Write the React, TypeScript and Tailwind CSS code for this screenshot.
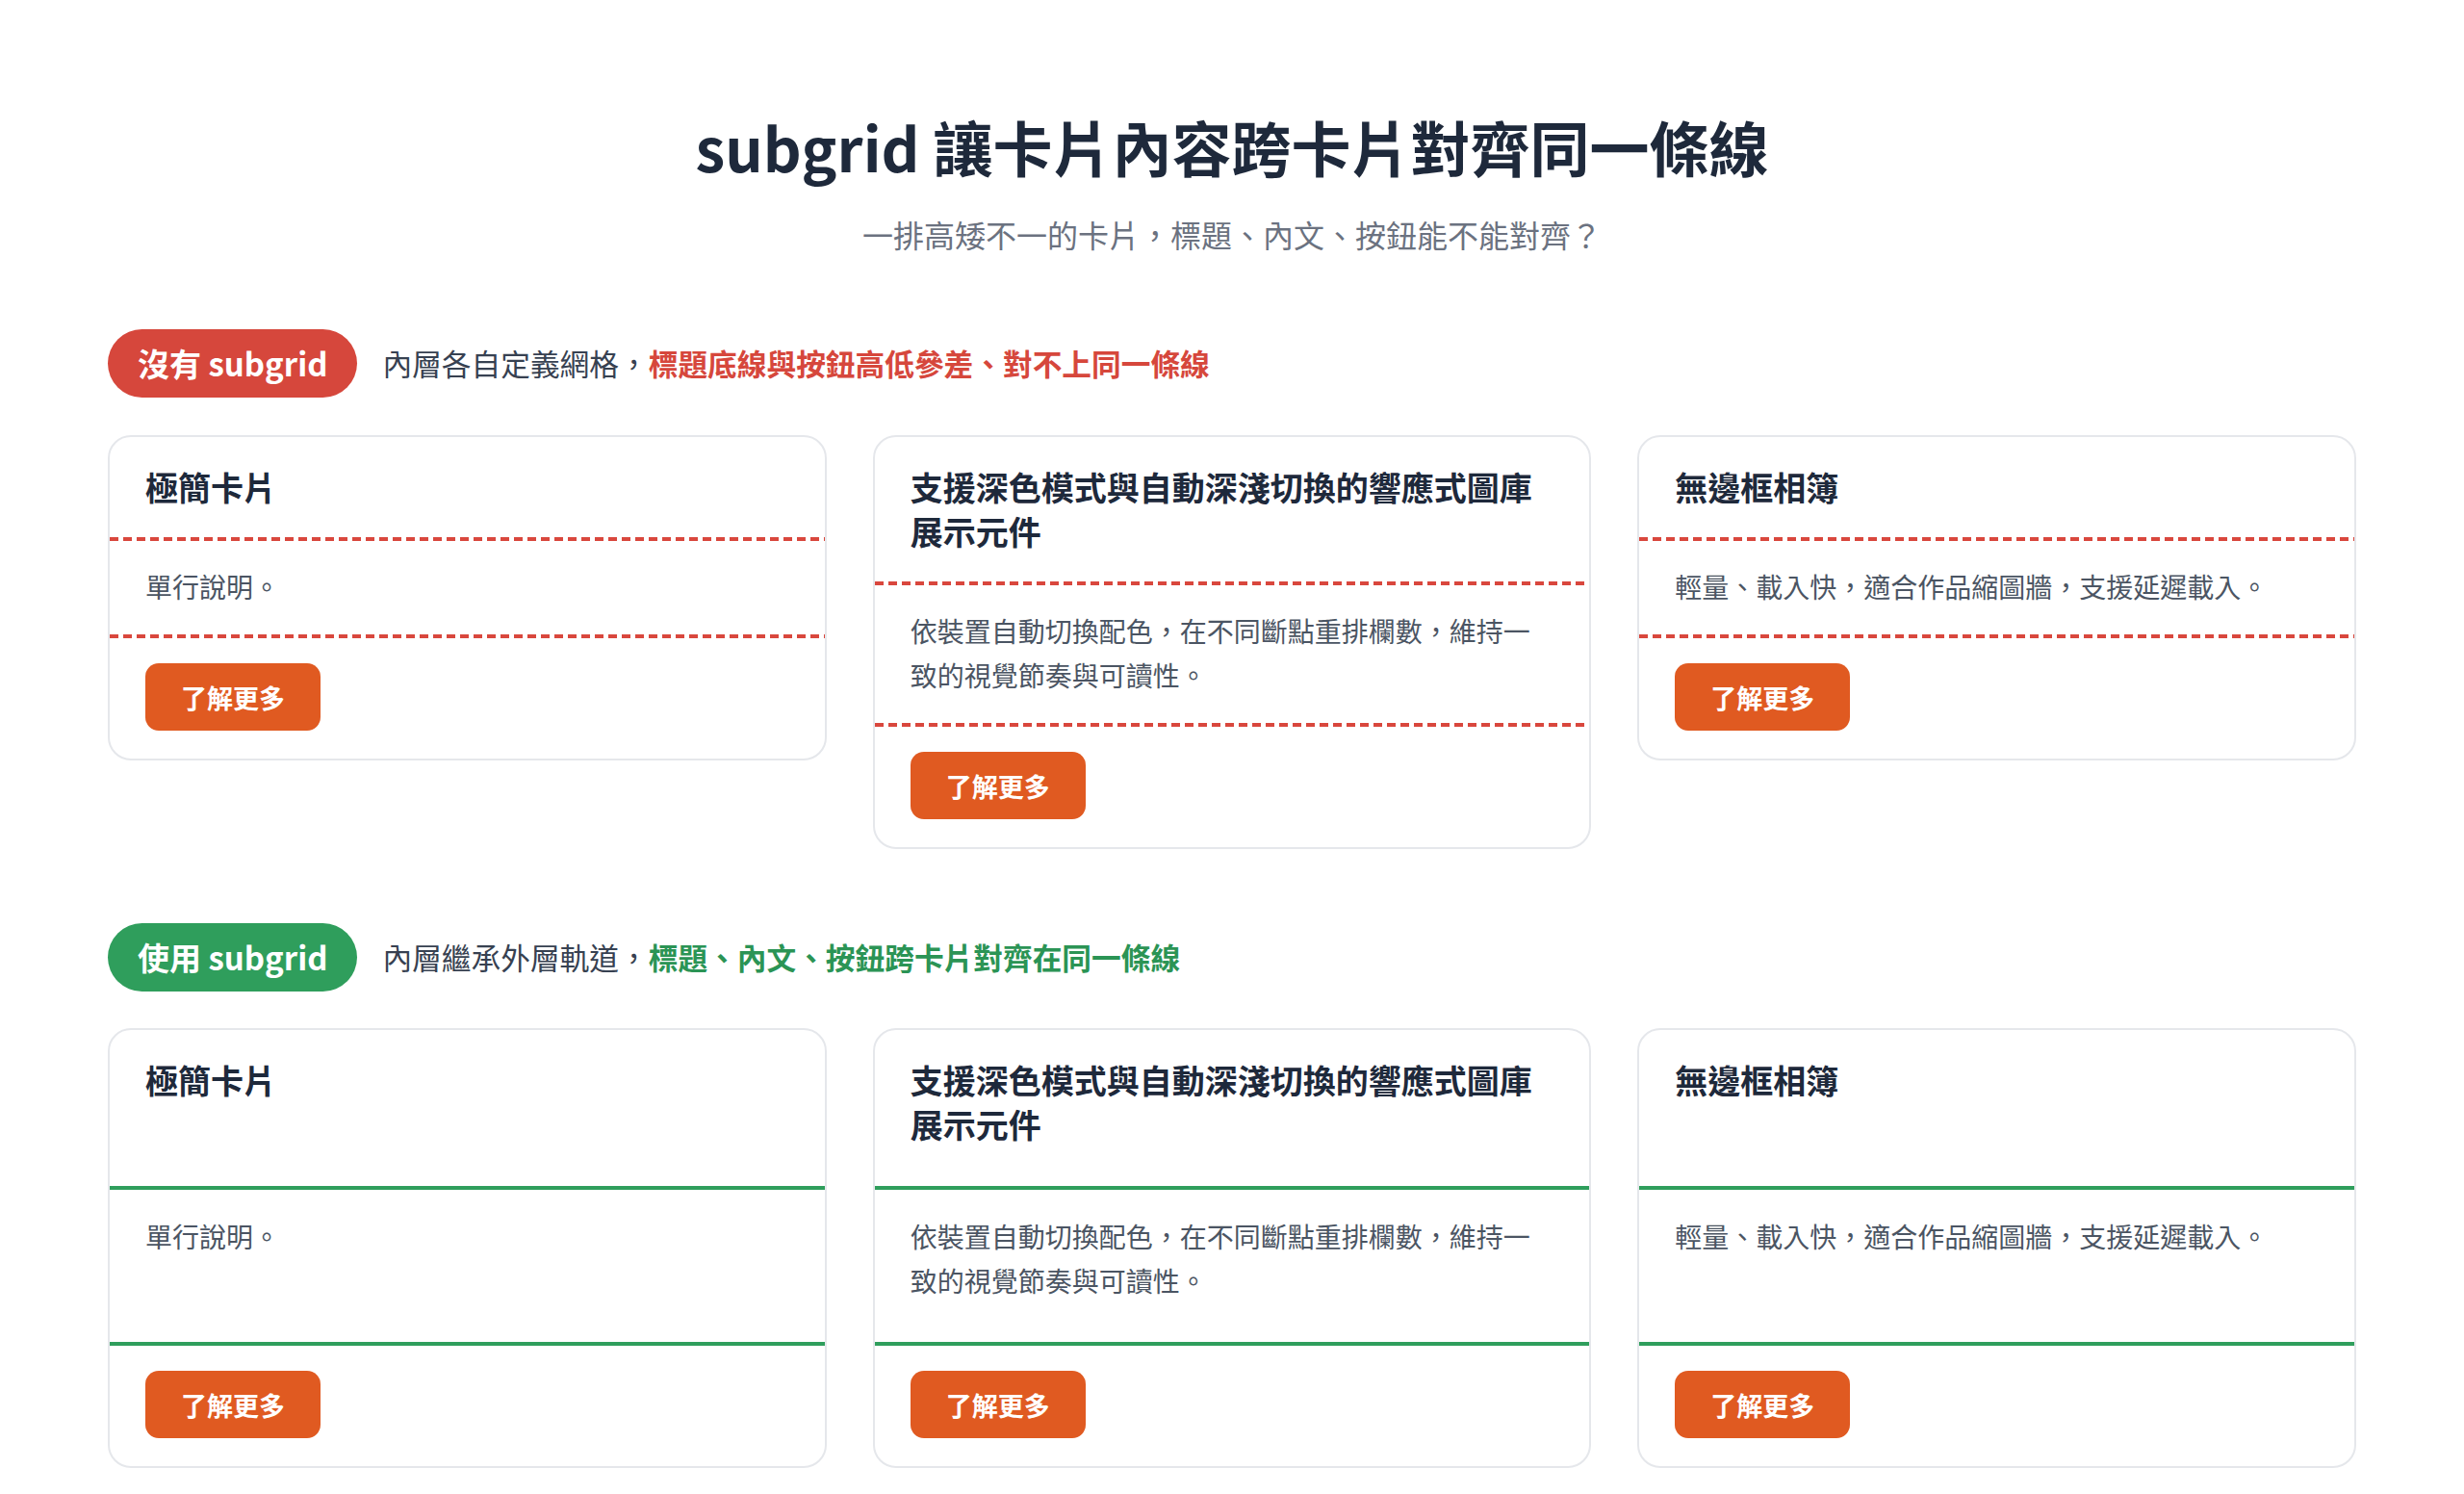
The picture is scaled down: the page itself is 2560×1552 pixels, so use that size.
import React from 'react';

interface CardData {
  title: string;
  body: string;
}

const cards: CardData[] = [
  { title: '極簡卡片', body: '單行說明。' },
  {
    title: '支援深色模式與自動深淺切換的響應式圖庫展示元件',
    body: '依裝置自動切換配色，在不同斷點重排欄數，維持一致的視覺節奏與可讀性。',
  },
  { title: '無邊框相簿', body: '輕量、載入快，適合作品縮圖牆，支援延遲載入。' },
];

function MoreButton() {
  return (
    <button className="h-[70px] px-[37px] rounded-[14px] bg-[#e05a21] text-white text-[27px] font-bold leading-none">
      了解更多
    </button>
  );
}

function DashedRule() {
  return <div className="h-[4px] bg-[repeating-linear-gradient(90deg,#d9473d_0_9px,transparent_9px_14px)]" />;
}

function SectionHead({
  badge,
  badgeColor,
  lead,
  highlight,
  highlightColor,
}: {
  badge: string;
  badgeColor: string;
  lead: string;
  highlight: string;
  highlightColor: string;
}) {
  return (
    <div className="flex items-center gap-[26px]">
      <span
        className={`h-[71px] px-[31px] rounded-full flex items-center text-white text-[33px] font-bold ${badgeColor}`}
      >
        {badge}
      </span>
      <p className="text-[30.7px] text-[#374151]">
        {lead}
        <span className={`font-bold ${highlightColor}`}>{highlight}</span>
      </p>
    </div>
  );
}

// 沒有 subgrid：每張卡片自己排，線條各自為政
function PlainCard({ title, body }: CardData) {
  return (
    <div className="flex flex-col bg-white border-2 border-[#e5e7eb] rounded-[24px] overflow-hidden">
      <div className="px-[37px] pt-[29px] pb-[29px]">
        <h3 className="text-[34px] leading-[46px] font-bold text-[#1e293b]">{title}</h3>
      </div>
      <DashedRule />
      <div className="px-[37px] pt-[24px] pb-[27px]">
        <p className="text-[28px] leading-[46px] text-[#4b5563]">{body}</p>
      </div>
      <DashedRule />
      <div className="px-[37px] pt-[26px] pb-[29px]">
        <MoreButton />
      </div>
    </div>
  );
}

// 使用 subgrid：三列繼承外層軌道
function SubgridCard({ title, body }: CardData) {
  return (
    <div className="grid grid-rows-subgrid row-span-3 gap-0 bg-white border-2 border-[#e5e7eb] rounded-[24px]">
      <div className="px-[37px] pt-[29px] pb-[41px] border-b-4 border-[#2f9e5c]">
        <h3 className="text-[34px] leading-[46px] font-bold text-[#1e293b]">{title}</h3>
      </div>
      <div className="px-[37px] pt-[25px] pb-[41px] border-b-4 border-[#2f9e5c]">
        <p className="text-[28px] leading-[46px] text-[#4b5563]">{body}</p>
      </div>
      <div className="px-[37px] pt-[26px] pb-[29px]">
        <MoreButton />
      </div>
    </div>
  );
}

export default function App() {
  return (
    <div
      className="min-h-screen bg-white px-[112px] pt-[112px] pb-[112px]"
      style={{ fontFamily: '"Noto Sans CJK TC", "Noto Sans", sans-serif' }}
    >
      <header className="text-center">
        <h1 className="text-[62px] leading-[80px] font-bold text-[#1e293b]">
          subgrid 讓卡片內容跨卡片對齊同一條線
        </h1>
        <p className="mt-[27px] text-[32px] leading-[48px] text-[#6b7280]">
          一排高矮不一的卡片，標題、內文、按鈕能不能對齊？
        </p>
      </header>

      <section className="mt-[75px]">
        <SectionHead
          badge="沒有 subgrid"
          badgeColor="bg-[#d6473c]"
          lead="內層各自定義網格，"
          highlight="標題底線與按鈕高低參差、對不上同一條線"
          highlightColor="text-[#d6473c]"
        />
        <div className="mt-[39px] grid grid-cols-3 gap-[48px] items-start">
          {cards.map((c) => (
            <PlainCard key={c.title} {...c} />
          ))}
        </div>
      </section>

      <section className="mt-[77px]">
        <SectionHead
          badge="使用 subgrid"
          badgeColor="bg-[#2f9e5c]"
          lead="內層繼承外層軌道，"
          highlight="標題、內文、按鈕跨卡片對齊在同一條線"
          highlightColor="text-[#2b9455]"
        />
        <div className="mt-[38px] grid grid-cols-3 gap-x-[48px] gap-y-0">
          {cards.map((c) => (
            <SubgridCard key={c.title} {...c} />
          ))}
        </div>
      </section>
    </div>
  );
}
